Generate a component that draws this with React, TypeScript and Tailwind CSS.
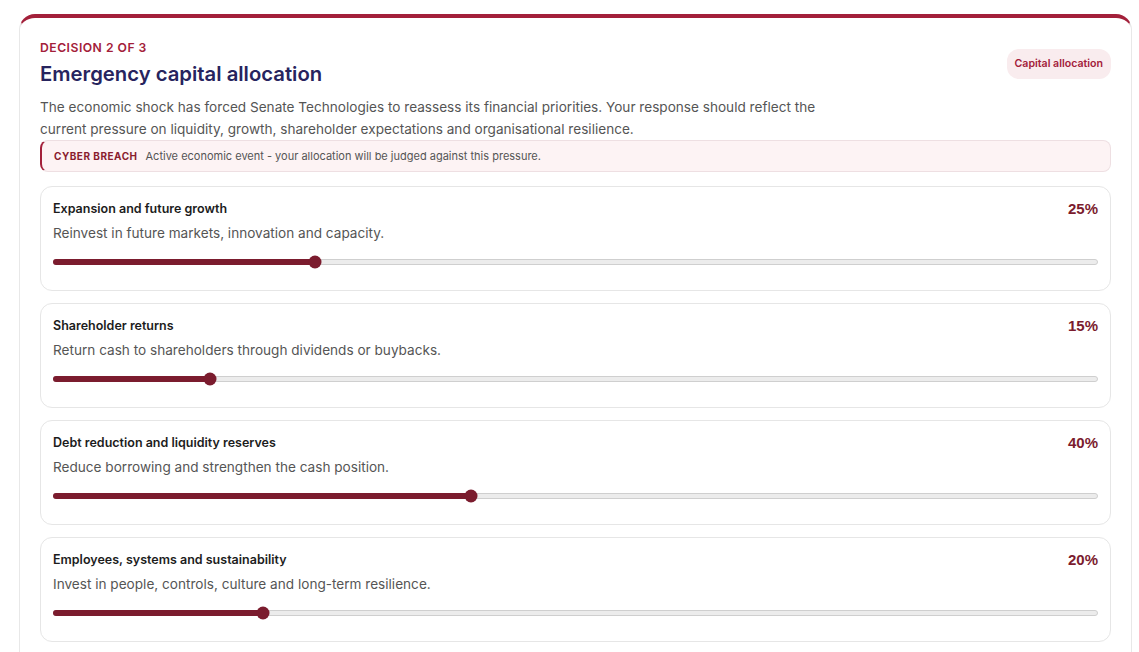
import React from "react";

const allocations = [
  {
    title: "Expansion and future growth",
    desc: "Reinvest in future markets, innovation and capacity.",
    value: 25,
  },
  {
    title: "Shareholder returns",
    desc: "Return cash to shareholders through dividends or buybacks.",
    value: 15,
  },
  {
    title: "Debt reduction and liquidity reserves",
    desc: "Reduce borrowing and strengthen the cash position.",
    value: 40,
  },
  {
    title: "Employees, systems and sustainability",
    desc: "Invest in people, controls, culture and long-term resilience.",
    value: 20,
  },
];

function AllocationCard({ title, desc, value }: { title: string; desc: string; value: number }) {
  return (
    <div className="rounded-xl border border-[#e6e6e6] bg-white px-3 pt-[12px] pb-[25px]">
      <div className="flex h-5 items-center justify-between">
        <h3 className="text-[12.5px] font-semibold leading-5 text-[#1c1c1c]">{title}</h3>
        <span className="font-['Liberation_Sans',Arial,sans-serif] text-[15px] font-bold leading-5 text-[#7b1c2e]">
          {value}%
        </span>
      </div>
      <p className="mt-[4px] text-[13.6px] leading-5 text-[#555]">{desc}</p>
      <div className="relative mt-[16px] h-[6px] rounded-full border border-[#cfcfcf] bg-[#ececec]">
        <div
          className="absolute -top-px -left-px h-[6px] rounded-full bg-[#7b1c2e]"
          style={{ width: `${value}%` }}
        />
        <div
          className="absolute top-1/2 h-[13px] w-[13px] -translate-x-1/2 -translate-y-1/2 rounded-full bg-[#7b1c2e]"
          style={{ left: `${value}%` }}
        />
      </div>
    </div>
  );
}

export default function App() {
  return (
    <div className="min-h-[652px] bg-white pt-[14px] pl-[19px] pr-[7px] font-['Inter',sans-serif]">
      <section className="rounded-t-2xl border-x border-t-4 border-x-[#e8e8e8] border-t-[#a3203a] bg-white px-5 pt-[22px] pb-8">
        <div className="flex items-center justify-between">
          <div>
            <p className="text-[12.2px] font-semibold uppercase leading-4 tracking-[0.04em] text-[#a3203a]">
              Decision 2 of 3
            </p>
            <h1 className="mt-[4px] text-[20.3px] font-semibold leading-7 text-[#27245e]">
              Emergency capital allocation
            </h1>
          </div>
          <span className="rounded-xl bg-[#f9ecee] px-2 py-[7px] text-[10.6px] font-semibold text-[#a3203a]">
            Capital allocation
          </span>
        </div>
        <p className="mt-2 max-w-[800px] text-[13.6px] leading-[22px] text-[#555]">
          The economic shock has forced Senate Technologies to reassess its financial priorities. Your
          response should reflect the current pressure on liquidity, growth, shareholder expectations and
          organisational resilience.
        </p>
        <div className="flex h-8 items-center gap-2 rounded-lg border border-[#eedfe2] border-l-2 border-l-[#a3203a] bg-[#fdf3f4] px-3">
          <span className="text-[10px] font-bold uppercase tracking-[0.05em] text-[#8a1c2e]">Cyber breach</span>
          <span className="text-[11px] text-[#555]">
            Active economic event - your allocation will be judged against this pressure.
          </span>
        </div>
        <div className="mt-[14px] flex flex-col gap-[12px]">
          {allocations.map((a) => (
            <AllocationCard key={a.title} {...a} />
          ))}
        </div>
      </section>
    </div>
  );
}
